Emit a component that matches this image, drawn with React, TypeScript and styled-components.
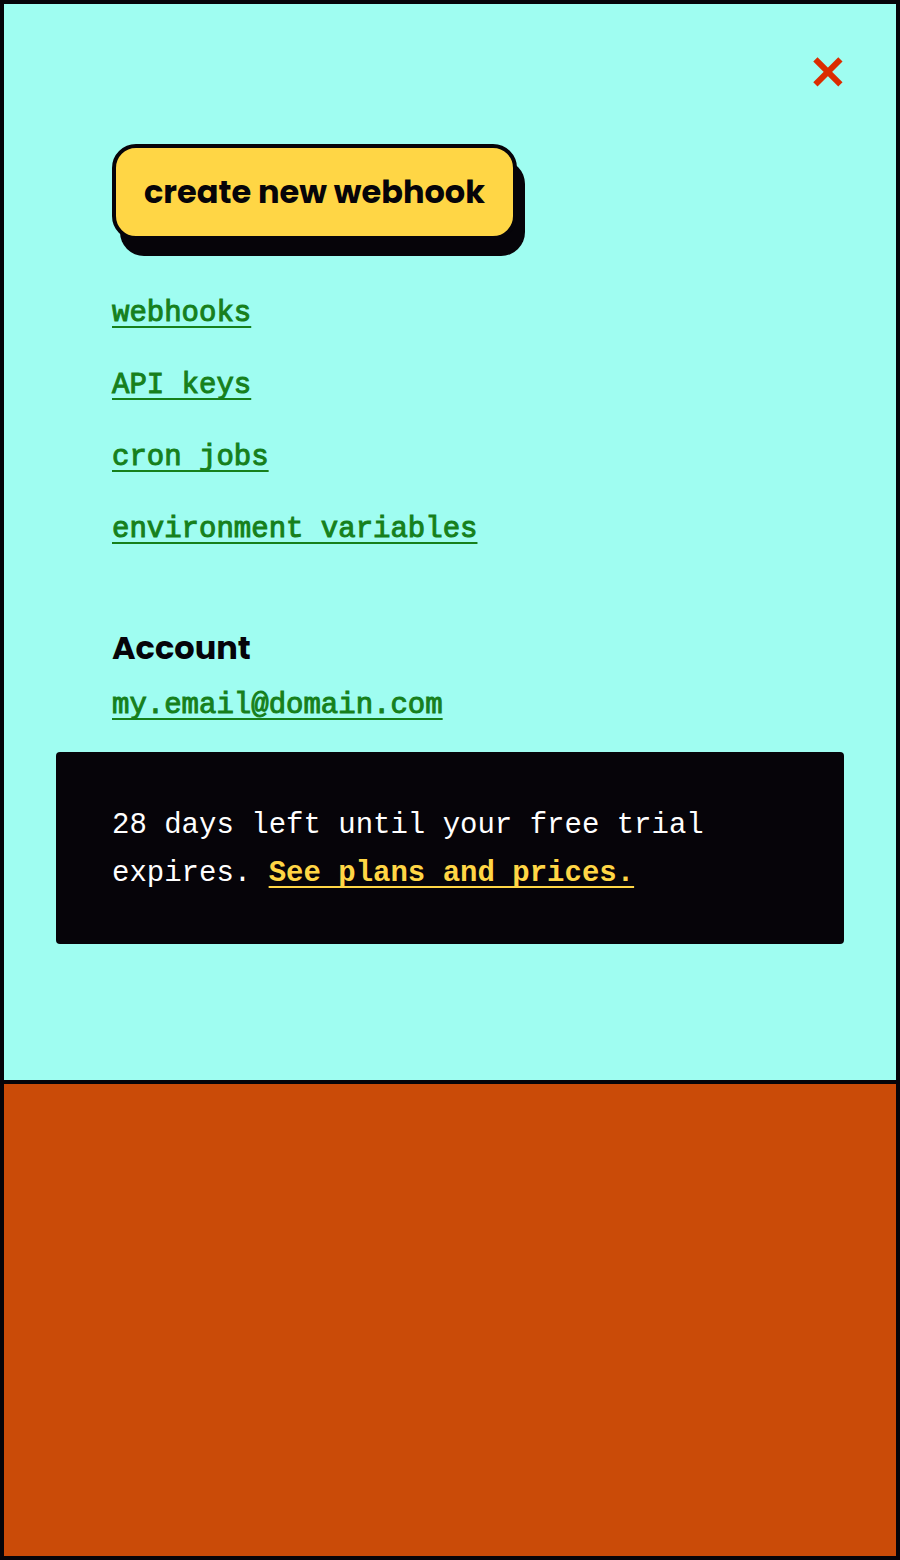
import React from "react";
import styled, { createGlobalStyle, css } from "styled-components";

const ink = "#060409";
const mint = "#9ffdf1";
const yellow = "#ffd645";
const green = "#16801c";
const red = "#db2c00";
const rust = "#ca4b08";

const headingFont = `Poppins, Inter, "Liberation Sans", sans-serif`;
const monoFont = `"Liberation Mono", monospace`;

const GlobalStyle = createGlobalStyle`
  *, *::before, *::after { box-sizing: border-box; }
  body { margin: 0; background: ${rust}; }
`;

const Page = styled.div`
  display: flex;
  flex-direction: column;
  min-height: 100vh;
  border: 4px solid ${ink};
  background: ${rust};
  color: ${ink};
  font: 400 29px/48px ${monoFont};
`;

const Menu = styled.header`
  display: flex;
  flex-direction: column;
  padding: 52px 52px 136px;
  border-bottom: 4px solid ${ink};
  background: ${mint};
`;

const CloseButton = styled.button`
  align-self: flex-end;
  width: 32px;
  height: 32px;
  padding: 0;
  border: 0;
  background: none;
  color: ${red};
  cursor: pointer;

  svg {
    display: block;
  }
`;

const Section = styled.div<{ $top: number }>`
  display: flex;
  flex-direction: column;
  align-items: flex-start;
  margin-top: ${({ $top }) => $top}px;
  padding: 0 56px;
`;

const CreateButton = styled.button`
  padding: 24px 28px;
  border: 4px solid ${ink};
  border-radius: 24px;
  background: ${yellow};
  box-shadow: 8px 16px 0 ${ink};
  color: ${ink};
  font: 700 32px/40px ${headingFont};
  cursor: pointer;
`;

const LinkList = styled.ul`
  display: flex;
  flex-direction: column;
  gap: 24px;
  margin: 50px 0 0;
  padding: 0;
  list-style: none;
`;

const TextLink = styled.a<{ $onDark?: boolean }>`
  color: ${green};
  -webkit-text-stroke: 1px;
  text-decoration: underline 2px;
  text-underline-offset: 5px;
  text-decoration-skip-ink: none;

  ${({ $onDark }) =>
    $onDark &&
    css`
      color: ${yellow};
      font-weight: 700;
      -webkit-text-stroke: 0;
    `}
`;

const Heading = styled.h2`
  margin: 0 0 10px;
  font: 700 32px/48px ${headingFont};
`;

const Notice = styled.p`
  margin: 22px 0 0;
  padding: 50px 56px 46px;
  border-radius: 4px;
  background: ${ink};
  color: #ffffff;
`;

const links = ["webhooks", "API keys", "cron jobs", "environment variables"];

export default function App() {
  return (
    <Page>
      <GlobalStyle />
      <Menu>
        <CloseButton type="button" aria-label="Close menu">
          <svg width="32" height="32" viewBox="0 0 32 32" aria-hidden="true">
            <path d="M3.4 3.4 28.4 28.4M28.4 3.4 3.4 28.4" stroke="currentColor" strokeWidth="6" />
          </svg>
        </CloseButton>
        <Section as="nav" $top={56} aria-label="Main">
          <CreateButton type="button">create new webhook</CreateButton>
          <LinkList>
            {links.map((label) => (
              <li key={label}>
                <TextLink href="#">{label}</TextLink>
              </li>
            ))}
          </LinkList>
        </Section>
        <Section as="section" $top={70}>
          <Heading>Account</Heading>
          <TextLink href="#">my.email@domain.com</TextLink>
        </Section>
        <Notice>
          28 days left until your free trial expires.{" "}
          <TextLink href="#" $onDark>
            See plans and prices.
          </TextLink>
        </Notice>
      </Menu>
    </Page>
  );
}
